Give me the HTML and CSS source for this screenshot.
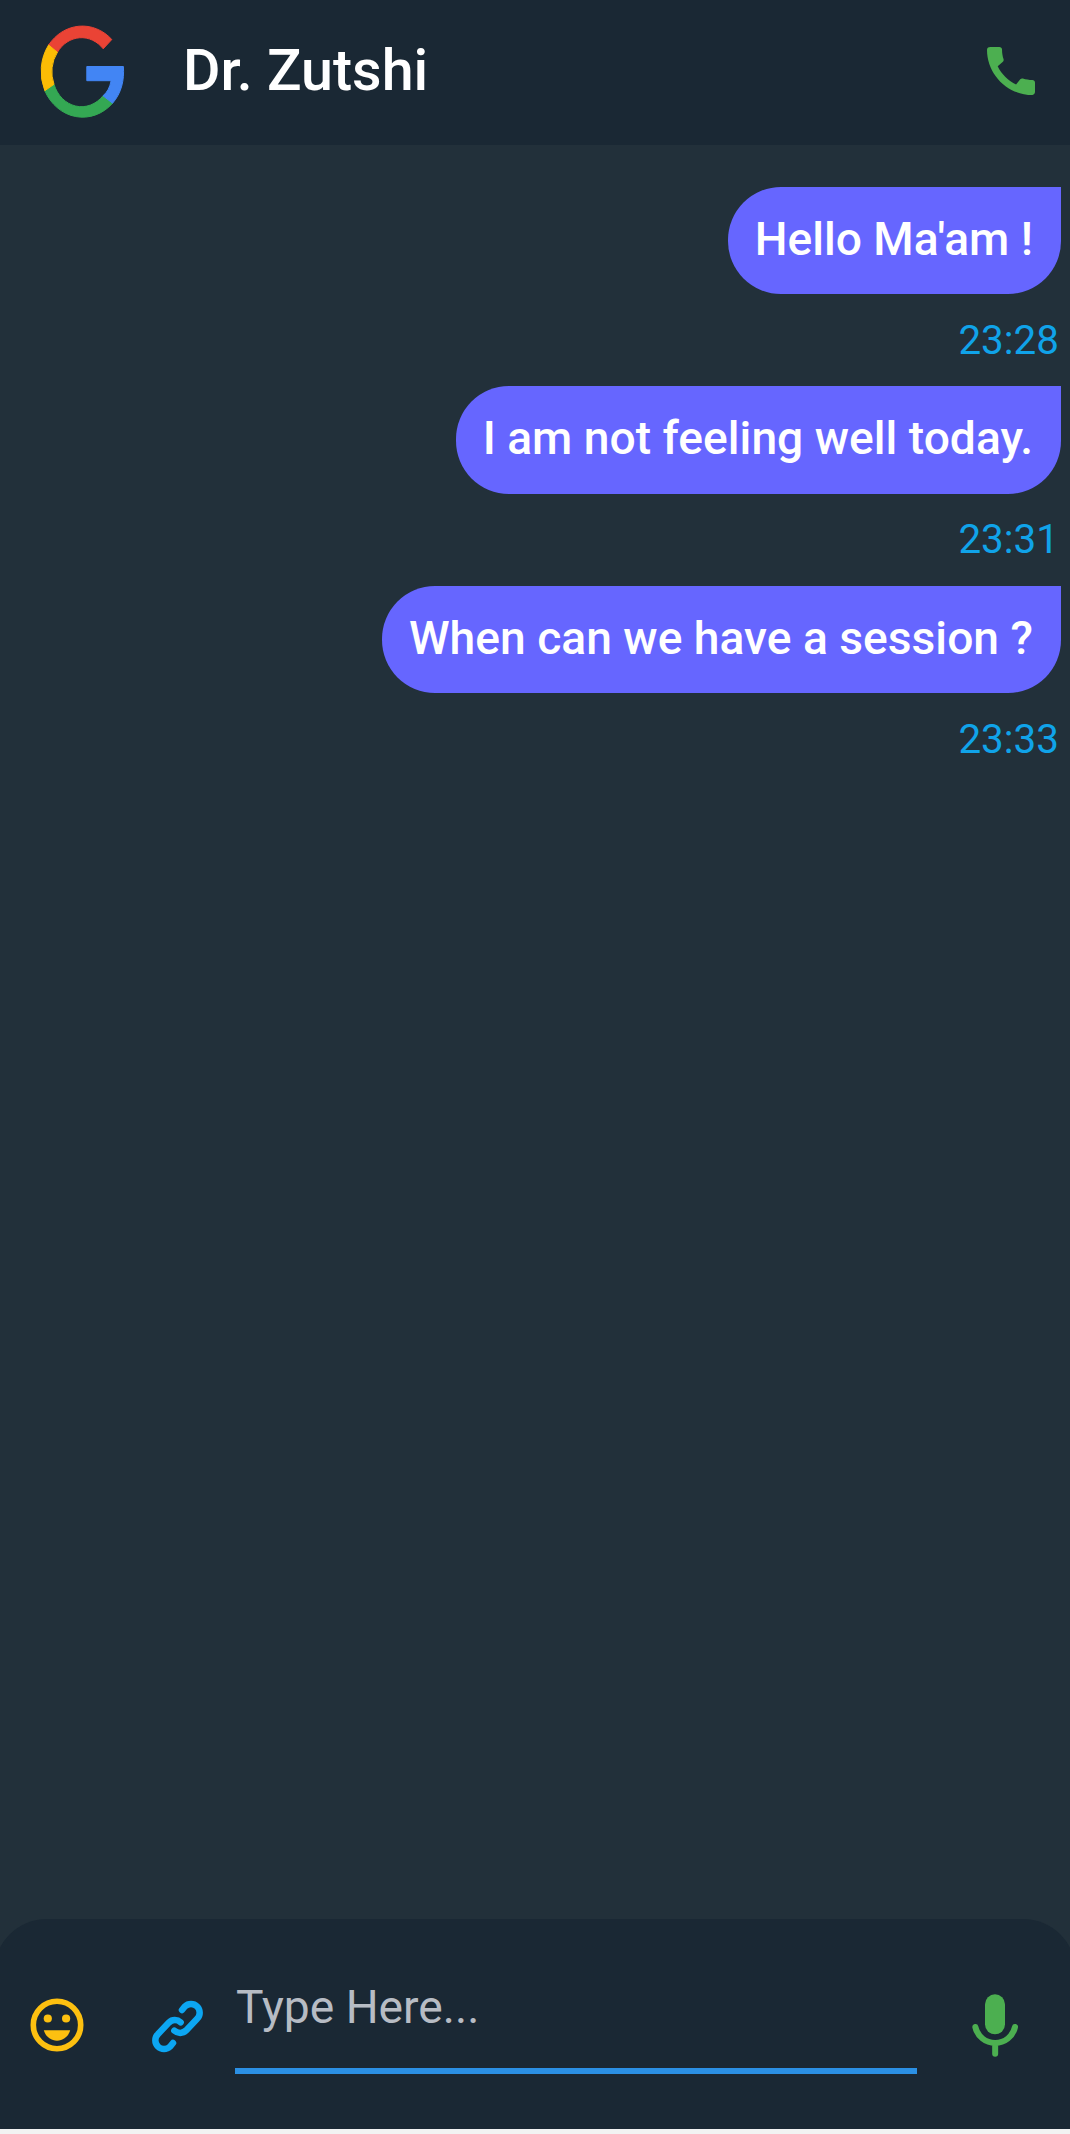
FILE: index.html
```html
<!DOCTYPE html>
<html lang="en">
<head>
<meta charset="utf-8">
<title>Dr. Zutshi</title>
<link rel="stylesheet" href="styles.css">
</head>
<body>
<div class="app">
  <header class="header">
    <svg class="avatar" viewBox="40 25 84 94" aria-hidden="true">
      <path fill="#ea4335" stroke="#ea4335" d="M48.6 45A42 46.8 0 0 1 111.8 39.5L103.2 48.8A29 33 0 0 0 57.4 52.3Z"/>
      <path fill="#34a853" stroke="#34a853" d="M44.8 90.7A42 46.8 0 0 0 112.6 103.2L103 95.8A29 33 0 0 1 54 84.3Z"/>
      <path fill="#fbbc05" stroke="#fbbc05" d="M48.6 45A42 46.8 0 0 0 44.8 90.7L54 84.3A29 33 0 0 1 57.4 52.3Z"/>
      <path fill="#4285f4" stroke="#4285f4" d="M86.8 66.5H123.4C124.4 80 121.5 93 112.6 103.2L103 95.8C107.5 92 110 87 111.1 80.7H86.8Z"/>
    </svg>
    <h1 class="name">Dr. Zutshi</h1>
    <svg class="call" viewBox="0 0 24 24" aria-hidden="true">
      <path d="M20.01 15.38c-1.23 0-2.42-.2-3.53-.56-.35-.12-.74-.03-1.01.24l-1.57 1.97c-2.83-1.35-5.48-3.9-6.89-6.83l1.95-1.66c.27-.28.35-.67.24-1.02-.37-1.11-.56-2.3-.56-3.53 0-.54-.45-.99-.99-.99H4.19C3.65 3 3 3.24 3 3.99 3 13.28 10.73 21 20.01 21c.71 0 .99-.63.99-1.18v-3.45c0-.54-.45-.99-.99-.99z"/>
    </svg>
  </header>

  <main class="messages">
    <div class="message">
      <p class="bubble">Hello Ma'am !</p>
      <time class="time">23:28</time>
    </div>
    <div class="message">
      <p class="bubble">I am not feeling well today.</p>
      <time class="time">23:31</time>
    </div>
    <div class="message">
      <p class="bubble">When can we have a session ?</p>
      <time class="time">23:33</time>
    </div>
  </main>

  <footer class="composer">
    <svg class="emoji" viewBox="0 0 54 54" aria-hidden="true">
      <circle cx="27" cy="27" r="23.7" fill="none" stroke="#fdc010" stroke-width="5.6"/>
      <circle cx="17.8" cy="20.5" r="4.1"/>
      <circle cx="36.1" cy="20.5" r="4.1"/>
      <path d="M13.8 32.3H40.2C38.2 38.7 33.2 42.7 27 42.7S15.8 38.7 13.8 32.3Z"/>
    </svg>
    <svg class="link" viewBox="457 303 153 153" aria-hidden="true">
      <path d="M547 330L555.6 319.6A26 26 0 0 1 592.4 356.4L559.4 391.4A26 26 0 0 1 524 392"/>
      <path d="M520 429L511.4 439.4A26 26 0 0 1 474.6 402.6L507.6 367.6A26 26 0 0 1 543 367"/>
    </svg>
    <div class="field">Type Here...</div>
    <svg class="mic" viewBox="276 281 138 189" aria-hidden="true">
      <rect x="315" y="282" width="60" height="120" rx="30"/>
      <path d="M286 380A60.9 60.9 0 0 0 405 380M345.5 428V460"/>
    </svg>
  </footer>
</div>
</body>
</html>
```
FILE: styles.css
```css
* {
  box-sizing: border-box;
}

body {
  margin: 0;
  background: #f2f2f2;
  font-family: Roboto, "Liberation Sans", sans-serif;
}

.app {
  display: flex;
  flex-direction: column;
  height: 2129px;
  overflow: hidden;
  background: #22303a;
}

.header {
  display: flex;
  align-items: center;
  height: 145px;
  padding: 0 27px 1px 40px;
  background: #1a2834;
}

.avatar {
  width: 84px;
  height: 94px;
  overflow: visible;
}

.name {
  flex: 1;
  margin: 0 0 3px 59px;
  color: #fff;
  font-size: 57.4px;
  font-weight: 500;
  line-height: 68px;
}

.call {
  width: 64px;
  height: 64px;
  margin-bottom: 2px;
  fill: #4caf50;
}

.messages {
  display: flex;
  flex: 1;
  flex-direction: column;
  padding: 41.5px 9px 0 0;
}

.message {
  display: flex;
  flex-direction: column;
  align-items: flex-end;
  height: 199.5px;
}

.bubble {
  height: 107.5px;
  margin: 0;
  padding: 25px 28px 0 27px;
  border-radius: 53px 0 53px 53px;
  background: #6666ff;
  color: #fff;
  font-size: 46.2px;
  font-weight: 500;
  line-height: 54px;
}

.time {
  margin: 22.5px 2px 0 0;
  color: #10a3e9;
  font-size: 40.4px;
  line-height: 48px;
}

.composer {
  display: flex;
  align-items: flex-start;
  height: 210px;
  margin: 0 -6px;
  padding: 0 58px 0 36px;
  border-radius: 53px 53px 0 0;
  background: #1a2834;
}

.emoji {
  width: 54px;
  height: 54px;
  margin-top: 78.5px;
  fill: #fdc010;
}

.link {
  width: 51px;
  height: 51px;
  margin: 82px 0 0 68px;
  overflow: visible;
  fill: none;
  stroke: #0ca6f2;
  stroke-width: 19.5;
  stroke-linecap: round;
}

.field {
  flex: 1;
  height: 155px;
  margin: 0 55px 0 32px;
  padding: 61px 0 0 1px;
  border-bottom: 6px solid #2b90e4;
  color: #b7bcc4;
  font-size: 46.2px;
  line-height: 54px;
}

.mic {
  width: 46px;
  height: 63px;
  margin-top: 75px;
  fill: #4caf50;
}

.mic path {
  fill: none;
  stroke: #4caf50;
  stroke-width: 18;
  stroke-linecap: round;
}
```
